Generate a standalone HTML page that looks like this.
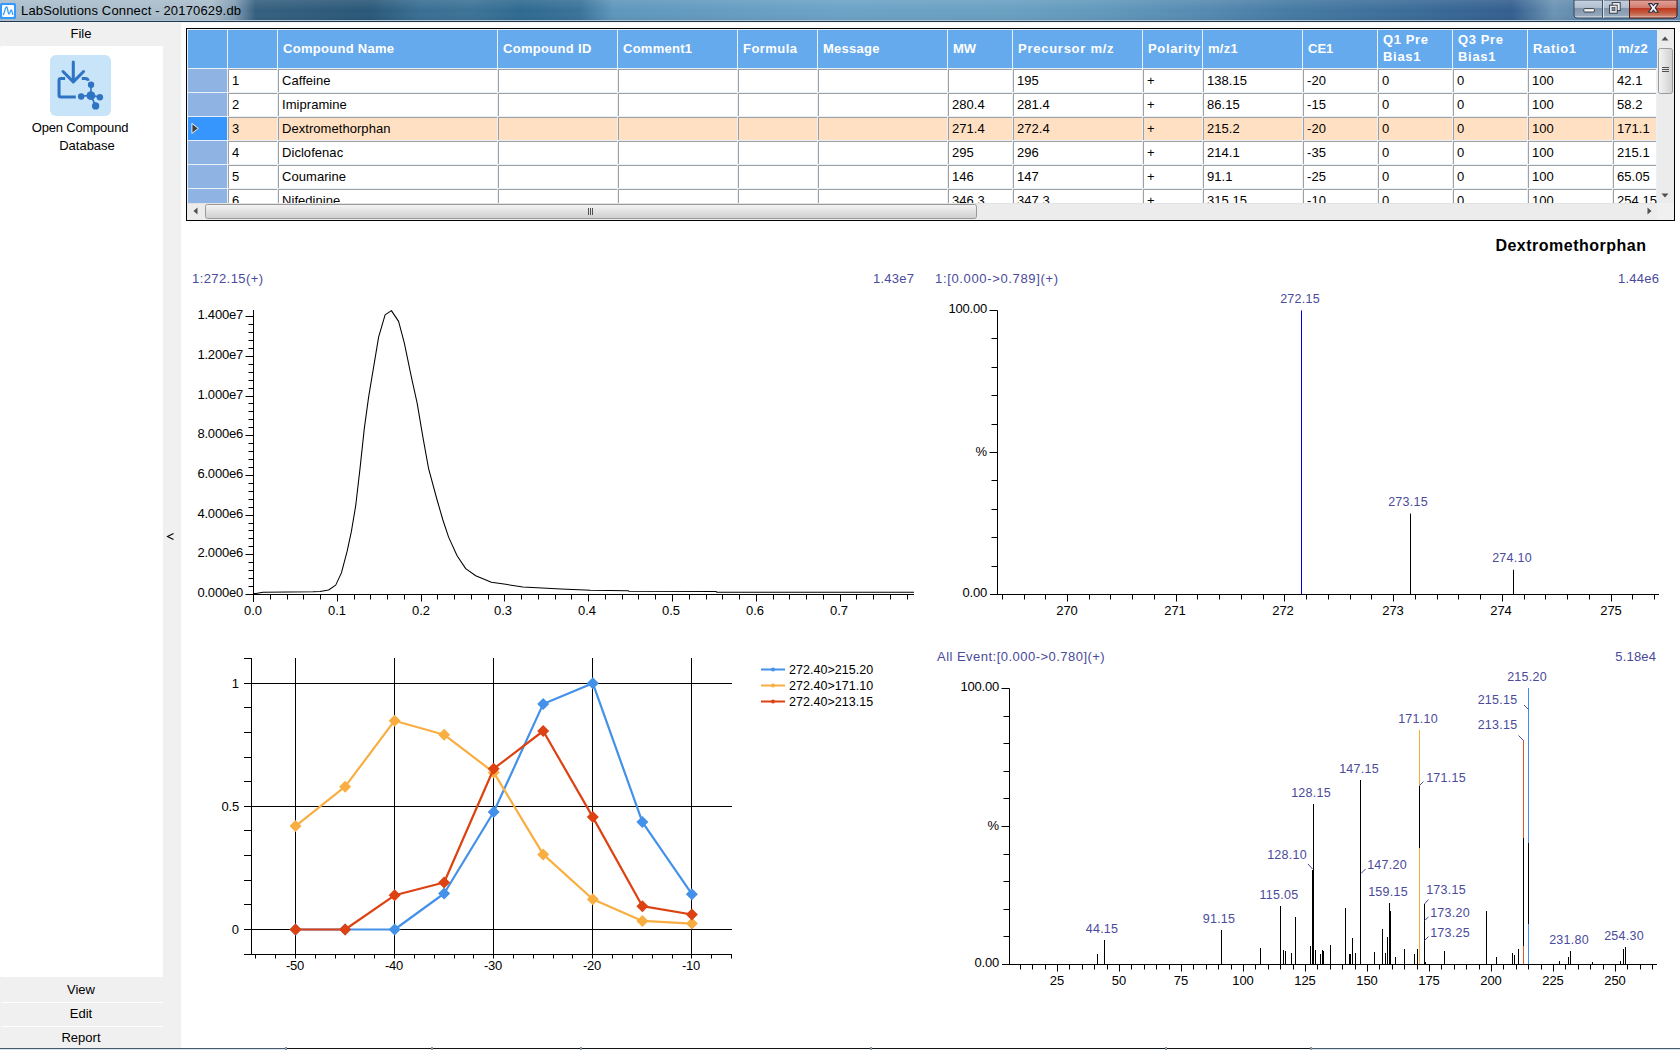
<!DOCTYPE html><html><head><meta charset="utf-8"><title>LabSolutions Connect</title><style>html,body{margin:0;padding:0;width:1680px;height:1050px;overflow:hidden;background:#fff;font-family:"Liberation Sans",sans-serif}</style></head><body><svg width="1680" height="1050" viewBox="0 0 1680 1050" style="position:absolute;left:0;top:0" font-family='"Liberation Sans", sans-serif' shape-rendering="auto">
<rect x="0" y="0" width="1680" height="1050" fill="#ffffff"/>
<defs><linearGradient id="tb" x1="0" x2="1" y1="0" y2="0"><stop offset="0" stop-color="#aabdcc"/><stop offset="0.125" stop-color="#aabdcb"/><stop offset="0.140" stop-color="#7f9bb2"/><stop offset="0.152" stop-color="#36607f"/><stop offset="0.22" stop-color="#2a5878"/><stop offset="0.25" stop-color="#3a6f93"/><stop offset="0.28" stop-color="#3d7397"/><stop offset="0.31" stop-color="#2f6a90"/><stop offset="0.345" stop-color="#3a7399"/><stop offset="0.365" stop-color="#5f96bc"/><stop offset="0.50" stop-color="#6ca3c6"/><stop offset="0.60" stop-color="#6aa0c2"/><stop offset="0.66" stop-color="#6198bb"/><stop offset="0.72" stop-color="#5589b0"/><stop offset="0.77" stop-color="#467aa3"/><stop offset="0.84" stop-color="#3b6c98"/><stop offset="0.90" stop-color="#345f8f"/><stop offset="0.925" stop-color="#6d94b4"/><stop offset="0.95" stop-color="#5683aa"/><stop offset="1" stop-color="#5e8ab0"/></linearGradient><linearGradient id="tbv" x1="0" x2="0" y1="0" y2="1"><stop offset="0" stop-color="#ffffff" stop-opacity="0.10"/><stop offset="0.5" stop-color="#ffffff" stop-opacity="0.0"/><stop offset="1" stop-color="#000000" stop-opacity="0.05"/></linearGradient><linearGradient id="btn" x1="0" x2="0" y1="0" y2="1"><stop offset="0" stop-color="#c5d2de"/><stop offset="0.42" stop-color="#b0bfcf"/><stop offset="0.47" stop-color="#8396ab"/><stop offset="0.86" stop-color="#94a7bb"/><stop offset="0.93" stop-color="#c8d4e0"/><stop offset="1" stop-color="#c8d4e0"/></linearGradient><linearGradient id="cls" x1="0" x2="0" y1="0" y2="1"><stop offset="0" stop-color="#e3a59e"/><stop offset="0.42" stop-color="#d27a6c"/><stop offset="0.47" stop-color="#bd3722"/><stop offset="0.7" stop-color="#c45a3e"/><stop offset="0.86" stop-color="#c97a66"/><stop offset="0.93" stop-color="#dfaaa0"/><stop offset="1" stop-color="#dfaaa0"/></linearGradient><linearGradient id="hthumb" x1="0" x2="0" y1="0" y2="1"><stop offset="0" stop-color="#f4f4f4"/><stop offset="0.5" stop-color="#e2e2e2"/><stop offset="1" stop-color="#cfcfcf"/></linearGradient><linearGradient id="vthumb" x1="0" x2="1" y1="0" y2="0"><stop offset="0" stop-color="#f4f4f4"/><stop offset="0.5" stop-color="#e2e2e2"/><stop offset="1" stop-color="#cfcfcf"/></linearGradient></defs>
<rect x="0" y="0" width="1680" height="21" fill="url(#tb)"/>
<rect x="0" y="0" width="1680" height="21" fill="url(#tbv)"/>
<rect x="0" y="20" width="1680" height="1" fill="#a9c2d6"/>
<rect x="0" y="21" width="1680" height="1" fill="#1f3444"/>
<rect x="0" y="22" width="1680" height="1" fill="#f4f6f8"/>
<rect x="0" y="3" width="16" height="16" fill="#3399ff" rx="1.5"/>
<rect x="2" y="5" width="12" height="12" fill="#ffffff" rx="1"/>
<path d="M3.3,14.6 C4.5,13.5 5,7 6.5,7 C8,7 7.8,14 9,14 C10,14 10.3,10 11.2,10 C12.1,10 12.2,13 12.8,14.4" stroke="#3399ff" stroke-width="1.3" fill="none" stroke-linecap="round"/>
<text x="21" y="15" font-size="13" fill="#000" textLength="220" lengthAdjust="spacing">LabSolutions Connect - 20170629.db</text>
<path d="M1574,0 L1677,0 L1677,15 Q1677,18 1674,18 L1577,18 Q1574,18 1574,15 Z" fill="url(#btn)" stroke="#3a4a5c" stroke-width="1"/>
<path d="M1629.5,0 L1677,0 L1677,15 Q1677,18 1674,18 L1629.5,18 Z" fill="url(#cls)" stroke="#5a1e14" stroke-width="1"/>
<rect x="1602" y="0" width="1" height="18" fill="#40526a"/>
<rect x="1603" y="0" width="1" height="18" fill="#d8e2ec"/>
<rect x="1583.8" y="8.6" width="10.6" height="3.4" rx="0.8" fill="#f4f4f4" stroke="#2a3240" stroke-width="0.9"/>
<rect x="1612.2" y="2.6" width="8" height="8" fill="#f0f0f0" stroke="#2a3240" stroke-width="0.9"/>
<rect x="1609.6" y="5.2" width="7.6" height="8" fill="#f0f0f0" stroke="#2a3240" stroke-width="0.9"/>
<rect x="1612" y="7.6" width="3" height="3.2" fill="#7d8ea3" stroke="#2a3240" stroke-width="0.6"/>
<path d="M1648.6,3.6 L1651.9,3.6 L1653.4,5.7 L1654.9,3.6 L1658.2,3.6 L1655.3,7.9 L1658.2,12.2 L1654.9,12.2 L1653.4,10.1 L1651.9,12.2 L1648.6,12.2 L1651.5,7.9 Z" fill="#fafafa" stroke="#2a3240" stroke-width="1.1" stroke-linejoin="round"/>
<rect x="0" y="23" width="181" height="1025" fill="#f0f0f0"/>
<text x="81" y="38" font-size="13" fill="#000" text-anchor="middle">File</text>
<path d="M0,48 Q0,46 2,46 L163,46 L163,977 L2,977 Q0,977 0,975 Z" fill="#ffffff"/>
<rect x="50" y="55" width="61" height="61" fill="#c8e4f8" rx="6"/>
<g transform="translate(40,45) scale(0.0761904761904762)" fill="none" stroke="#2f74c4" stroke-width="40" stroke-linecap="round" stroke-linejoin="round"><path d="M437,222 L437,470"/><path d="M302,348 L437,483 L572,348"/><path d="M330,440 L275,440 Q250,440 250,465 L250,660 Q250,683 273,683 L470,683" stroke-linecap="butt"/><path d="M548,440 L598,440 Q628,440 632,470" stroke-linecap="butt"/><path d="M670,525 L668,660 L540,675 M668,660 L785,685 M668,660 L730,800" stroke-width="22"/></g>
<g transform="translate(40,45) scale(0.0761904761904762)" fill="#2f74c4"><circle cx="668" cy="665" r="58"/><circle cx="670" cy="522" r="42"/><circle cx="540" cy="675" r="42"/><circle cx="786" cy="686" r="42"/><circle cx="730" cy="800" r="48"/></g>
<text x="80" y="132" font-size="13" fill="#000" text-anchor="middle" letter-spacing="-0.2">Open Compound</text>
<text x="87" y="150" font-size="13" fill="#000" text-anchor="middle">Database</text>
<path d="M173.5,533.5 L167.5,536.5 L173.5,539.5" stroke="#000" stroke-width="1.1" fill="none"/>
<text x="81" y="994" font-size="13" fill="#000" text-anchor="middle">View</text>
<rect x="2" y="1002" width="161" height="1" fill="#ffffff"/>
<text x="81" y="1018" font-size="13" fill="#000" text-anchor="middle">Edit</text>
<rect x="2" y="1026" width="161" height="1" fill="#ffffff"/>
<text x="81" y="1042" font-size="13" fill="#000" text-anchor="middle">Report</text>
<rect x="0" y="1048" width="285" height="1" fill="#4a5a68"/>
<rect x="0" y="1049" width="285" height="1" fill="#d6e6f6"/>
<rect x="285" y="1048" width="1026" height="1" fill="#121619"/>
<rect x="285" y="1049" width="1026" height="1" fill="#fbfbfb"/>
<rect x="1311" y="1048" width="369" height="1" fill="#4a5a68"/>
<rect x="1311" y="1049" width="369" height="1" fill="#d6e6f6"/>
<rect x="285" y="1047" width="2" height="3" fill="#8a96a0"/>
<rect x="431" y="1047" width="2" height="3" fill="#8a96a0"/>
<rect x="580" y="1047" width="2" height="3" fill="#8a96a0"/>
<rect x="870" y="1047" width="2" height="3" fill="#8a96a0"/>
<rect x="1165" y="1047" width="2" height="3" fill="#8a96a0"/>
<rect x="1310" y="1047" width="2" height="3" fill="#8a96a0"/>
<rect x="186.5" y="28.5" width="1488" height="192" fill="none" stroke="#000" stroke-width="1"/>
<rect x="187" y="29" width="1487" height="191" fill="#e8f1fa"/>
<clipPath id="tclip"><rect x="187" y="29" width="1470" height="174"/></clipPath>
<g clip-path="url(#tclip)">
<rect x="188" y="30" width="1469" height="38" fill="#66aaee"/>
<rect x="227" y="30" width="1" height="38" fill="#e8f1fa"/>
<rect x="277" y="30" width="1" height="38" fill="#e8f1fa"/>
<rect x="497" y="30" width="1" height="38" fill="#e8f1fa"/>
<rect x="617" y="30" width="1" height="38" fill="#e8f1fa"/>
<rect x="737" y="30" width="1" height="38" fill="#e8f1fa"/>
<rect x="817" y="30" width="1" height="38" fill="#e8f1fa"/>
<rect x="947" y="30" width="1" height="38" fill="#e8f1fa"/>
<rect x="1012" y="30" width="1" height="38" fill="#e8f1fa"/>
<rect x="1142" y="30" width="1" height="38" fill="#e8f1fa"/>
<rect x="1202" y="30" width="1" height="38" fill="#e8f1fa"/>
<rect x="1302" y="30" width="1" height="38" fill="#e8f1fa"/>
<rect x="1377" y="30" width="1" height="38" fill="#e8f1fa"/>
<rect x="1452" y="30" width="1" height="38" fill="#e8f1fa"/>
<rect x="1527" y="30" width="1" height="38" fill="#e8f1fa"/>
<rect x="1612" y="30" width="1" height="38" fill="#e8f1fa"/>
<rect x="188" y="68" width="1469" height="1" fill="#e8f1fa"/>
<text x="283" y="53" font-size="13" fill="#fff" font-weight="bold" textLength="111" lengthAdjust="spacing">Compound Name</text>
<text x="503" y="53" font-size="13" fill="#fff" font-weight="bold" textLength="88.3" lengthAdjust="spacing">Compound ID</text>
<text x="623" y="53" font-size="13" fill="#fff" font-weight="bold" textLength="69" lengthAdjust="spacing">Comment1</text>
<text x="743" y="53" font-size="13" fill="#fff" font-weight="bold" textLength="54" lengthAdjust="spacing">Formula</text>
<text x="823" y="53" font-size="13" fill="#fff" font-weight="bold" textLength="56.5" lengthAdjust="spacing">Message</text>
<text x="953" y="53" font-size="13" fill="#fff" font-weight="bold" letter-spacing="0">MW</text>
<text x="1018" y="53" font-size="13" fill="#fff" font-weight="bold" textLength="95.6" lengthAdjust="spacing">Precursor m/z</text>
<text x="1148" y="53" font-size="13" fill="#fff" font-weight="bold" textLength="52.2" lengthAdjust="spacing">Polarity</text>
<text x="1208" y="53" font-size="13" fill="#fff" font-weight="bold" letter-spacing="0.3">m/z1</text>
<text x="1308" y="53" font-size="13" fill="#fff" font-weight="bold" letter-spacing="0">CE1</text>
<text x="1383" y="44" font-size="13" fill="#fff" font-weight="bold" textLength="45" lengthAdjust="spacing">Q1 Pre</text>
<text x="1383" y="61" font-size="13" fill="#fff" font-weight="bold" textLength="37.5" lengthAdjust="spacing">Bias1</text>
<text x="1458" y="44" font-size="13" fill="#fff" font-weight="bold" textLength="45" lengthAdjust="spacing">Q3 Pre</text>
<text x="1458" y="61" font-size="13" fill="#fff" font-weight="bold" textLength="37.5" lengthAdjust="spacing">Bias1</text>
<text x="1533" y="53" font-size="13" fill="#fff" font-weight="bold" textLength="43" lengthAdjust="spacing">Ratio1</text>
<text x="1618" y="53" font-size="13" fill="#fff" font-weight="bold" letter-spacing="0.3">m/z2</text>
<rect x="188" y="69" width="39" height="23" fill="#8fb3e3"/>
<rect x="228" y="69" width="49" height="23" fill="#a0a0a0"/>
<rect x="229" y="70" width="48" height="22" fill="#ffffff"/>
<text x="232" y="85" font-size="13" fill="#000" letter-spacing="0.05">1</text>
<rect x="278" y="69" width="219" height="23" fill="#a0a0a0"/>
<rect x="279" y="70" width="218" height="22" fill="#ffffff"/>
<text x="282" y="85" font-size="13" fill="#000" letter-spacing="0.05">Caffeine</text>
<rect x="498" y="69" width="119" height="23" fill="#a0a0a0"/>
<rect x="499" y="70" width="118" height="22" fill="#ffffff"/>
<rect x="618" y="69" width="119" height="23" fill="#a0a0a0"/>
<rect x="619" y="70" width="118" height="22" fill="#ffffff"/>
<rect x="738" y="69" width="79" height="23" fill="#a0a0a0"/>
<rect x="739" y="70" width="78" height="22" fill="#ffffff"/>
<rect x="818" y="69" width="129" height="23" fill="#a0a0a0"/>
<rect x="819" y="70" width="128" height="22" fill="#ffffff"/>
<rect x="948" y="69" width="64" height="23" fill="#a0a0a0"/>
<rect x="949" y="70" width="63" height="22" fill="#ffffff"/>
<rect x="1013" y="69" width="129" height="23" fill="#a0a0a0"/>
<rect x="1014" y="70" width="128" height="22" fill="#ffffff"/>
<text x="1017" y="85" font-size="13" fill="#000" letter-spacing="0.05">195</text>
<rect x="1143" y="69" width="59" height="23" fill="#a0a0a0"/>
<rect x="1144" y="70" width="58" height="22" fill="#ffffff"/>
<text x="1147" y="85" font-size="13" fill="#000" letter-spacing="0.05">+</text>
<rect x="1203" y="69" width="99" height="23" fill="#a0a0a0"/>
<rect x="1204" y="70" width="98" height="22" fill="#ffffff"/>
<text x="1207" y="85" font-size="13" fill="#000" letter-spacing="0.05">138.15</text>
<rect x="1303" y="69" width="74" height="23" fill="#a0a0a0"/>
<rect x="1304" y="70" width="73" height="22" fill="#ffffff"/>
<text x="1307" y="85" font-size="13" fill="#000" letter-spacing="0.05">-20</text>
<rect x="1378" y="69" width="74" height="23" fill="#a0a0a0"/>
<rect x="1379" y="70" width="73" height="22" fill="#ffffff"/>
<text x="1382" y="85" font-size="13" fill="#000" letter-spacing="0.05">0</text>
<rect x="1453" y="69" width="74" height="23" fill="#a0a0a0"/>
<rect x="1454" y="70" width="73" height="22" fill="#ffffff"/>
<text x="1457" y="85" font-size="13" fill="#000" letter-spacing="0.05">0</text>
<rect x="1528" y="69" width="84" height="23" fill="#a0a0a0"/>
<rect x="1529" y="70" width="83" height="22" fill="#ffffff"/>
<text x="1532" y="85" font-size="13" fill="#000" letter-spacing="0.05">100</text>
<rect x="1613" y="69" width="43" height="23" fill="#a0a0a0"/>
<rect x="1614" y="70" width="42" height="22" fill="#ffffff"/>
<text x="1617" y="85" font-size="13" fill="#000" letter-spacing="0.05">42.1</text>
<rect x="188" y="93" width="39" height="23" fill="#8fb3e3"/>
<rect x="228" y="93" width="49" height="23" fill="#a0a0a0"/>
<rect x="229" y="94" width="48" height="22" fill="#ffffff"/>
<text x="232" y="109" font-size="13" fill="#000" letter-spacing="0.05">2</text>
<rect x="278" y="93" width="219" height="23" fill="#a0a0a0"/>
<rect x="279" y="94" width="218" height="22" fill="#ffffff"/>
<text x="282" y="109" font-size="13" fill="#000" letter-spacing="0.05">Imipramine</text>
<rect x="498" y="93" width="119" height="23" fill="#a0a0a0"/>
<rect x="499" y="94" width="118" height="22" fill="#ffffff"/>
<rect x="618" y="93" width="119" height="23" fill="#a0a0a0"/>
<rect x="619" y="94" width="118" height="22" fill="#ffffff"/>
<rect x="738" y="93" width="79" height="23" fill="#a0a0a0"/>
<rect x="739" y="94" width="78" height="22" fill="#ffffff"/>
<rect x="818" y="93" width="129" height="23" fill="#a0a0a0"/>
<rect x="819" y="94" width="128" height="22" fill="#ffffff"/>
<rect x="948" y="93" width="64" height="23" fill="#a0a0a0"/>
<rect x="949" y="94" width="63" height="22" fill="#ffffff"/>
<text x="952" y="109" font-size="13" fill="#000" letter-spacing="0.05">280.4</text>
<rect x="1013" y="93" width="129" height="23" fill="#a0a0a0"/>
<rect x="1014" y="94" width="128" height="22" fill="#ffffff"/>
<text x="1017" y="109" font-size="13" fill="#000" letter-spacing="0.05">281.4</text>
<rect x="1143" y="93" width="59" height="23" fill="#a0a0a0"/>
<rect x="1144" y="94" width="58" height="22" fill="#ffffff"/>
<text x="1147" y="109" font-size="13" fill="#000" letter-spacing="0.05">+</text>
<rect x="1203" y="93" width="99" height="23" fill="#a0a0a0"/>
<rect x="1204" y="94" width="98" height="22" fill="#ffffff"/>
<text x="1207" y="109" font-size="13" fill="#000" letter-spacing="0.05">86.15</text>
<rect x="1303" y="93" width="74" height="23" fill="#a0a0a0"/>
<rect x="1304" y="94" width="73" height="22" fill="#ffffff"/>
<text x="1307" y="109" font-size="13" fill="#000" letter-spacing="0.05">-15</text>
<rect x="1378" y="93" width="74" height="23" fill="#a0a0a0"/>
<rect x="1379" y="94" width="73" height="22" fill="#ffffff"/>
<text x="1382" y="109" font-size="13" fill="#000" letter-spacing="0.05">0</text>
<rect x="1453" y="93" width="74" height="23" fill="#a0a0a0"/>
<rect x="1454" y="94" width="73" height="22" fill="#ffffff"/>
<text x="1457" y="109" font-size="13" fill="#000" letter-spacing="0.05">0</text>
<rect x="1528" y="93" width="84" height="23" fill="#a0a0a0"/>
<rect x="1529" y="94" width="83" height="22" fill="#ffffff"/>
<text x="1532" y="109" font-size="13" fill="#000" letter-spacing="0.05">100</text>
<rect x="1613" y="93" width="43" height="23" fill="#a0a0a0"/>
<rect x="1614" y="94" width="42" height="22" fill="#ffffff"/>
<text x="1617" y="109" font-size="13" fill="#000" letter-spacing="0.05">58.2</text>
<rect x="188" y="117" width="39" height="23" fill="#3796fe"/>
<path d="M191.9,123.4 L198.4,128.4 L191.9,133.4 Z" fill="#404040" stroke="#ffffff" stroke-width="0.9" stroke-linejoin="miter"/>
<rect x="228" y="117" width="49" height="23" fill="#a0a0a0"/>
<rect x="229" y="118" width="48" height="22" fill="#ffe0c2"/>
<text x="232" y="133" font-size="13" fill="#000" letter-spacing="0.05">3</text>
<rect x="278" y="117" width="219" height="23" fill="#a0a0a0"/>
<rect x="279" y="118" width="218" height="22" fill="#ffe0c2"/>
<text x="282" y="133" font-size="13" fill="#000" letter-spacing="0.05">Dextromethorphan</text>
<rect x="498" y="117" width="119" height="23" fill="#a0a0a0"/>
<rect x="499" y="118" width="118" height="22" fill="#ffe0c2"/>
<rect x="618" y="117" width="119" height="23" fill="#a0a0a0"/>
<rect x="619" y="118" width="118" height="22" fill="#ffe0c2"/>
<rect x="738" y="117" width="79" height="23" fill="#a0a0a0"/>
<rect x="739" y="118" width="78" height="22" fill="#ffe0c2"/>
<rect x="818" y="117" width="129" height="23" fill="#a0a0a0"/>
<rect x="819" y="118" width="128" height="22" fill="#ffe0c2"/>
<rect x="948" y="117" width="64" height="23" fill="#a0a0a0"/>
<rect x="949" y="118" width="63" height="22" fill="#ffe0c2"/>
<text x="952" y="133" font-size="13" fill="#000" letter-spacing="0.05">271.4</text>
<rect x="1013" y="117" width="129" height="23" fill="#a0a0a0"/>
<rect x="1014" y="118" width="128" height="22" fill="#ffe0c2"/>
<text x="1017" y="133" font-size="13" fill="#000" letter-spacing="0.05">272.4</text>
<rect x="1143" y="117" width="59" height="23" fill="#a0a0a0"/>
<rect x="1144" y="118" width="58" height="22" fill="#ffe0c2"/>
<text x="1147" y="133" font-size="13" fill="#000" letter-spacing="0.05">+</text>
<rect x="1203" y="117" width="99" height="23" fill="#a0a0a0"/>
<rect x="1204" y="118" width="98" height="22" fill="#ffe0c2"/>
<text x="1207" y="133" font-size="13" fill="#000" letter-spacing="0.05">215.2</text>
<rect x="1303" y="117" width="74" height="23" fill="#a0a0a0"/>
<rect x="1304" y="118" width="73" height="22" fill="#ffe0c2"/>
<text x="1307" y="133" font-size="13" fill="#000" letter-spacing="0.05">-20</text>
<rect x="1378" y="117" width="74" height="23" fill="#a0a0a0"/>
<rect x="1379" y="118" width="73" height="22" fill="#ffe0c2"/>
<text x="1382" y="133" font-size="13" fill="#000" letter-spacing="0.05">0</text>
<rect x="1453" y="117" width="74" height="23" fill="#a0a0a0"/>
<rect x="1454" y="118" width="73" height="22" fill="#ffe0c2"/>
<text x="1457" y="133" font-size="13" fill="#000" letter-spacing="0.05">0</text>
<rect x="1528" y="117" width="84" height="23" fill="#a0a0a0"/>
<rect x="1529" y="118" width="83" height="22" fill="#ffe0c2"/>
<text x="1532" y="133" font-size="13" fill="#000" letter-spacing="0.05">100</text>
<rect x="1613" y="117" width="43" height="23" fill="#a0a0a0"/>
<rect x="1614" y="118" width="42" height="22" fill="#ffe0c2"/>
<text x="1617" y="133" font-size="13" fill="#000" letter-spacing="0.05">171.1</text>
<rect x="188" y="141" width="39" height="23" fill="#8fb3e3"/>
<rect x="228" y="141" width="49" height="23" fill="#a0a0a0"/>
<rect x="229" y="142" width="48" height="22" fill="#ffffff"/>
<text x="232" y="157" font-size="13" fill="#000" letter-spacing="0.05">4</text>
<rect x="278" y="141" width="219" height="23" fill="#a0a0a0"/>
<rect x="279" y="142" width="218" height="22" fill="#ffffff"/>
<text x="282" y="157" font-size="13" fill="#000" letter-spacing="0.05">Diclofenac</text>
<rect x="498" y="141" width="119" height="23" fill="#a0a0a0"/>
<rect x="499" y="142" width="118" height="22" fill="#ffffff"/>
<rect x="618" y="141" width="119" height="23" fill="#a0a0a0"/>
<rect x="619" y="142" width="118" height="22" fill="#ffffff"/>
<rect x="738" y="141" width="79" height="23" fill="#a0a0a0"/>
<rect x="739" y="142" width="78" height="22" fill="#ffffff"/>
<rect x="818" y="141" width="129" height="23" fill="#a0a0a0"/>
<rect x="819" y="142" width="128" height="22" fill="#ffffff"/>
<rect x="948" y="141" width="64" height="23" fill="#a0a0a0"/>
<rect x="949" y="142" width="63" height="22" fill="#ffffff"/>
<text x="952" y="157" font-size="13" fill="#000" letter-spacing="0.05">295</text>
<rect x="1013" y="141" width="129" height="23" fill="#a0a0a0"/>
<rect x="1014" y="142" width="128" height="22" fill="#ffffff"/>
<text x="1017" y="157" font-size="13" fill="#000" letter-spacing="0.05">296</text>
<rect x="1143" y="141" width="59" height="23" fill="#a0a0a0"/>
<rect x="1144" y="142" width="58" height="22" fill="#ffffff"/>
<text x="1147" y="157" font-size="13" fill="#000" letter-spacing="0.05">+</text>
<rect x="1203" y="141" width="99" height="23" fill="#a0a0a0"/>
<rect x="1204" y="142" width="98" height="22" fill="#ffffff"/>
<text x="1207" y="157" font-size="13" fill="#000" letter-spacing="0.05">214.1</text>
<rect x="1303" y="141" width="74" height="23" fill="#a0a0a0"/>
<rect x="1304" y="142" width="73" height="22" fill="#ffffff"/>
<text x="1307" y="157" font-size="13" fill="#000" letter-spacing="0.05">-35</text>
<rect x="1378" y="141" width="74" height="23" fill="#a0a0a0"/>
<rect x="1379" y="142" width="73" height="22" fill="#ffffff"/>
<text x="1382" y="157" font-size="13" fill="#000" letter-spacing="0.05">0</text>
<rect x="1453" y="141" width="74" height="23" fill="#a0a0a0"/>
<rect x="1454" y="142" width="73" height="22" fill="#ffffff"/>
<text x="1457" y="157" font-size="13" fill="#000" letter-spacing="0.05">0</text>
<rect x="1528" y="141" width="84" height="23" fill="#a0a0a0"/>
<rect x="1529" y="142" width="83" height="22" fill="#ffffff"/>
<text x="1532" y="157" font-size="13" fill="#000" letter-spacing="0.05">100</text>
<rect x="1613" y="141" width="43" height="23" fill="#a0a0a0"/>
<rect x="1614" y="142" width="42" height="22" fill="#ffffff"/>
<text x="1617" y="157" font-size="13" fill="#000" letter-spacing="0.05">215.1</text>
<rect x="188" y="165" width="39" height="23" fill="#8fb3e3"/>
<rect x="228" y="165" width="49" height="23" fill="#a0a0a0"/>
<rect x="229" y="166" width="48" height="22" fill="#ffffff"/>
<text x="232" y="181" font-size="13" fill="#000" letter-spacing="0.05">5</text>
<rect x="278" y="165" width="219" height="23" fill="#a0a0a0"/>
<rect x="279" y="166" width="218" height="22" fill="#ffffff"/>
<text x="282" y="181" font-size="13" fill="#000" letter-spacing="0.05">Coumarine</text>
<rect x="498" y="165" width="119" height="23" fill="#a0a0a0"/>
<rect x="499" y="166" width="118" height="22" fill="#ffffff"/>
<rect x="618" y="165" width="119" height="23" fill="#a0a0a0"/>
<rect x="619" y="166" width="118" height="22" fill="#ffffff"/>
<rect x="738" y="165" width="79" height="23" fill="#a0a0a0"/>
<rect x="739" y="166" width="78" height="22" fill="#ffffff"/>
<rect x="818" y="165" width="129" height="23" fill="#a0a0a0"/>
<rect x="819" y="166" width="128" height="22" fill="#ffffff"/>
<rect x="948" y="165" width="64" height="23" fill="#a0a0a0"/>
<rect x="949" y="166" width="63" height="22" fill="#ffffff"/>
<text x="952" y="181" font-size="13" fill="#000" letter-spacing="0.05">146</text>
<rect x="1013" y="165" width="129" height="23" fill="#a0a0a0"/>
<rect x="1014" y="166" width="128" height="22" fill="#ffffff"/>
<text x="1017" y="181" font-size="13" fill="#000" letter-spacing="0.05">147</text>
<rect x="1143" y="165" width="59" height="23" fill="#a0a0a0"/>
<rect x="1144" y="166" width="58" height="22" fill="#ffffff"/>
<text x="1147" y="181" font-size="13" fill="#000" letter-spacing="0.05">+</text>
<rect x="1203" y="165" width="99" height="23" fill="#a0a0a0"/>
<rect x="1204" y="166" width="98" height="22" fill="#ffffff"/>
<text x="1207" y="181" font-size="13" fill="#000" letter-spacing="0.05">91.1</text>
<rect x="1303" y="165" width="74" height="23" fill="#a0a0a0"/>
<rect x="1304" y="166" width="73" height="22" fill="#ffffff"/>
<text x="1307" y="181" font-size="13" fill="#000" letter-spacing="0.05">-25</text>
<rect x="1378" y="165" width="74" height="23" fill="#a0a0a0"/>
<rect x="1379" y="166" width="73" height="22" fill="#ffffff"/>
<text x="1382" y="181" font-size="13" fill="#000" letter-spacing="0.05">0</text>
<rect x="1453" y="165" width="74" height="23" fill="#a0a0a0"/>
<rect x="1454" y="166" width="73" height="22" fill="#ffffff"/>
<text x="1457" y="181" font-size="13" fill="#000" letter-spacing="0.05">0</text>
<rect x="1528" y="165" width="84" height="23" fill="#a0a0a0"/>
<rect x="1529" y="166" width="83" height="22" fill="#ffffff"/>
<text x="1532" y="181" font-size="13" fill="#000" letter-spacing="0.05">100</text>
<rect x="1613" y="165" width="43" height="23" fill="#a0a0a0"/>
<rect x="1614" y="166" width="42" height="22" fill="#ffffff"/>
<text x="1617" y="181" font-size="13" fill="#000" letter-spacing="0.05">65.05</text>
<rect x="188" y="189" width="39" height="23" fill="#8fb3e3"/>
<rect x="228" y="189" width="49" height="23" fill="#a0a0a0"/>
<rect x="229" y="190" width="48" height="22" fill="#ffffff"/>
<text x="232" y="205" font-size="13" fill="#000" letter-spacing="0.05">6</text>
<rect x="278" y="189" width="219" height="23" fill="#a0a0a0"/>
<rect x="279" y="190" width="218" height="22" fill="#ffffff"/>
<text x="282" y="205" font-size="13" fill="#000" letter-spacing="0.05">Nifedinine</text>
<rect x="498" y="189" width="119" height="23" fill="#a0a0a0"/>
<rect x="499" y="190" width="118" height="22" fill="#ffffff"/>
<rect x="618" y="189" width="119" height="23" fill="#a0a0a0"/>
<rect x="619" y="190" width="118" height="22" fill="#ffffff"/>
<rect x="738" y="189" width="79" height="23" fill="#a0a0a0"/>
<rect x="739" y="190" width="78" height="22" fill="#ffffff"/>
<rect x="818" y="189" width="129" height="23" fill="#a0a0a0"/>
<rect x="819" y="190" width="128" height="22" fill="#ffffff"/>
<rect x="948" y="189" width="64" height="23" fill="#a0a0a0"/>
<rect x="949" y="190" width="63" height="22" fill="#ffffff"/>
<text x="952" y="205" font-size="13" fill="#000" letter-spacing="0.05">346.3</text>
<rect x="1013" y="189" width="129" height="23" fill="#a0a0a0"/>
<rect x="1014" y="190" width="128" height="22" fill="#ffffff"/>
<text x="1017" y="205" font-size="13" fill="#000" letter-spacing="0.05">347.3</text>
<rect x="1143" y="189" width="59" height="23" fill="#a0a0a0"/>
<rect x="1144" y="190" width="58" height="22" fill="#ffffff"/>
<text x="1147" y="205" font-size="13" fill="#000" letter-spacing="0.05">+</text>
<rect x="1203" y="189" width="99" height="23" fill="#a0a0a0"/>
<rect x="1204" y="190" width="98" height="22" fill="#ffffff"/>
<text x="1207" y="205" font-size="13" fill="#000" letter-spacing="0.05">315.15</text>
<rect x="1303" y="189" width="74" height="23" fill="#a0a0a0"/>
<rect x="1304" y="190" width="73" height="22" fill="#ffffff"/>
<text x="1307" y="205" font-size="13" fill="#000" letter-spacing="0.05">-10</text>
<rect x="1378" y="189" width="74" height="23" fill="#a0a0a0"/>
<rect x="1379" y="190" width="73" height="22" fill="#ffffff"/>
<text x="1382" y="205" font-size="13" fill="#000" letter-spacing="0.05">0</text>
<rect x="1453" y="189" width="74" height="23" fill="#a0a0a0"/>
<rect x="1454" y="190" width="73" height="22" fill="#ffffff"/>
<text x="1457" y="205" font-size="13" fill="#000" letter-spacing="0.05">0</text>
<rect x="1528" y="189" width="84" height="23" fill="#a0a0a0"/>
<rect x="1529" y="190" width="83" height="22" fill="#ffffff"/>
<text x="1532" y="205" font-size="13" fill="#000" letter-spacing="0.05">100</text>
<rect x="1613" y="189" width="43" height="23" fill="#a0a0a0"/>
<rect x="1614" y="190" width="42" height="22" fill="#ffffff"/>
<text x="1617" y="205" font-size="13" fill="#000" letter-spacing="0.05">254.15</text>
</g>
<rect x="187" y="203" width="1470" height="17" fill="#ececec"/>
<rect x="187" y="203" width="1470" height="1" fill="#e3e3e3"/>
<path d="M197.5,207.5 L193.5,211 L197.5,214.5 Z" fill="#505050"/>
<rect x="205.5" y="204.5" width="771" height="14" rx="2" fill="url(#hthumb)" stroke="#9a9a9a" stroke-width="1"/>
<rect x="588" y="208" width="1" height="7" fill="#505050"/>
<rect x="590" y="208" width="1" height="7" fill="#505050"/>
<rect x="592" y="208" width="1" height="7" fill="#505050"/>
<path d="M1647.5,207.5 L1651.5,211 L1647.5,214.5 Z" fill="#505050"/>
<rect x="1657" y="29" width="17" height="174" fill="#ececec"/>
<path d="M1661.5,40.5 L1665,36.5 L1668.5,40.5 Z" fill="#505050"/>
<rect x="1658.5" y="48.5" width="14" height="45" rx="2" fill="url(#vthumb)" stroke="#9a9a9a" stroke-width="1"/>
<rect x="1662" y="67" width="7" height="1" fill="#505050"/>
<rect x="1662" y="69" width="7" height="1" fill="#505050"/>
<rect x="1662" y="71" width="7" height="1" fill="#505050"/>
<path d="M1661.5,193.5 L1665,197.5 L1668.5,193.5 Z" fill="#505050"/>
<rect x="1657" y="203" width="17" height="17" fill="#f0f0f0"/>
<text x="192" y="283" font-size="13" fill="#4a4a9c" textLength="71" lengthAdjust="spacing">1:272.15(+)</text>
<text x="914" y="283" font-size="13" fill="#4a4a9c" text-anchor="end" textLength="41" lengthAdjust="spacing">1.43e7</text>
<path d="M253.5,310 L253.5,602 M245.5,594.5 L914,594.5" stroke="#000" stroke-width="1" fill="none"/>
<text x="243" y="597" font-size="13" fill="#000" text-anchor="end" letter-spacing="-0.2">0.000e0</text>
<path d="M248.5,586.5 L253.5,586.5" stroke="#000" stroke-width="1"/>
<path d="M248.5,578.5 L253.5,578.5" stroke="#000" stroke-width="1"/>
<path d="M248.5,570.5 L253.5,570.5" stroke="#000" stroke-width="1"/>
<path d="M248.5,562.5 L253.5,562.5" stroke="#000" stroke-width="1"/>
<path d="M245.5,554.5 L253.5,554.5" stroke="#000" stroke-width="1"/>
<text x="243" y="557" font-size="13" fill="#000" text-anchor="end" letter-spacing="-0.2">2.000e6</text>
<path d="M248.5,546.5 L253.5,546.5" stroke="#000" stroke-width="1"/>
<path d="M248.5,538.5 L253.5,538.5" stroke="#000" stroke-width="1"/>
<path d="M248.5,530.5 L253.5,530.5" stroke="#000" stroke-width="1"/>
<path d="M248.5,523.5 L253.5,523.5" stroke="#000" stroke-width="1"/>
<path d="M245.5,515.5 L253.5,515.5" stroke="#000" stroke-width="1"/>
<text x="243" y="518" font-size="13" fill="#000" text-anchor="end" letter-spacing="-0.2">4.000e6</text>
<path d="M248.5,507.5 L253.5,507.5" stroke="#000" stroke-width="1"/>
<path d="M248.5,499.5 L253.5,499.5" stroke="#000" stroke-width="1"/>
<path d="M248.5,491.5 L253.5,491.5" stroke="#000" stroke-width="1"/>
<path d="M248.5,483.5 L253.5,483.5" stroke="#000" stroke-width="1"/>
<path d="M245.5,475.5 L253.5,475.5" stroke="#000" stroke-width="1"/>
<text x="243" y="478" font-size="13" fill="#000" text-anchor="end" letter-spacing="-0.2">6.000e6</text>
<path d="M248.5,467.5 L253.5,467.5" stroke="#000" stroke-width="1"/>
<path d="M248.5,459.5 L253.5,459.5" stroke="#000" stroke-width="1"/>
<path d="M248.5,451.5 L253.5,451.5" stroke="#000" stroke-width="1"/>
<path d="M248.5,443.5 L253.5,443.5" stroke="#000" stroke-width="1"/>
<path d="M245.5,435.5 L253.5,435.5" stroke="#000" stroke-width="1"/>
<text x="243" y="438" font-size="13" fill="#000" text-anchor="end" letter-spacing="-0.2">8.000e6</text>
<path d="M248.5,427.5 L253.5,427.5" stroke="#000" stroke-width="1"/>
<path d="M248.5,419.5 L253.5,419.5" stroke="#000" stroke-width="1"/>
<path d="M248.5,411.5 L253.5,411.5" stroke="#000" stroke-width="1"/>
<path d="M248.5,403.5 L253.5,403.5" stroke="#000" stroke-width="1"/>
<path d="M245.5,396.5 L253.5,396.5" stroke="#000" stroke-width="1"/>
<text x="243" y="399" font-size="13" fill="#000" text-anchor="end" letter-spacing="-0.2">1.000e7</text>
<path d="M248.5,388.5 L253.5,388.5" stroke="#000" stroke-width="1"/>
<path d="M248.5,380.5 L253.5,380.5" stroke="#000" stroke-width="1"/>
<path d="M248.5,372.5 L253.5,372.5" stroke="#000" stroke-width="1"/>
<path d="M248.5,364.5 L253.5,364.5" stroke="#000" stroke-width="1"/>
<path d="M245.5,356.5 L253.5,356.5" stroke="#000" stroke-width="1"/>
<text x="243" y="359" font-size="13" fill="#000" text-anchor="end" letter-spacing="-0.2">1.200e7</text>
<path d="M248.5,348.5 L253.5,348.5" stroke="#000" stroke-width="1"/>
<path d="M248.5,340.5 L253.5,340.5" stroke="#000" stroke-width="1"/>
<path d="M248.5,332.5 L253.5,332.5" stroke="#000" stroke-width="1"/>
<path d="M248.5,324.5 L253.5,324.5" stroke="#000" stroke-width="1"/>
<path d="M245.5,316.5 L253.5,316.5" stroke="#000" stroke-width="1"/>
<text x="243" y="319" font-size="13" fill="#000" text-anchor="end" letter-spacing="-0.2">1.400e7</text>
<text x="253" y="615" font-size="13" fill="#000" text-anchor="middle" letter-spacing="-0.1">0.0</text>
<path d="M270.5,594.5 L270.5,599.5" stroke="#000" stroke-width="1"/>
<path d="M287.5,594.5 L287.5,599.5" stroke="#000" stroke-width="1"/>
<path d="M303.5,594.5 L303.5,599.5" stroke="#000" stroke-width="1"/>
<path d="M320.5,594.5 L320.5,599.5" stroke="#000" stroke-width="1"/>
<path d="M337.5,594.5 L337.5,601.5" stroke="#000" stroke-width="1"/>
<text x="337" y="615" font-size="13" fill="#000" text-anchor="middle" letter-spacing="-0.1">0.1</text>
<path d="M354.5,594.5 L354.5,599.5" stroke="#000" stroke-width="1"/>
<path d="M370.5,594.5 L370.5,599.5" stroke="#000" stroke-width="1"/>
<path d="M387.5,594.5 L387.5,599.5" stroke="#000" stroke-width="1"/>
<path d="M404.5,594.5 L404.5,599.5" stroke="#000" stroke-width="1"/>
<path d="M421.5,594.5 L421.5,601.5" stroke="#000" stroke-width="1"/>
<text x="421" y="615" font-size="13" fill="#000" text-anchor="middle" letter-spacing="-0.1">0.2</text>
<path d="M437.5,594.5 L437.5,599.5" stroke="#000" stroke-width="1"/>
<path d="M454.5,594.5 L454.5,599.5" stroke="#000" stroke-width="1"/>
<path d="M471.5,594.5 L471.5,599.5" stroke="#000" stroke-width="1"/>
<path d="M488.5,594.5 L488.5,599.5" stroke="#000" stroke-width="1"/>
<path d="M504.5,594.5 L504.5,601.5" stroke="#000" stroke-width="1"/>
<text x="503" y="615" font-size="13" fill="#000" text-anchor="middle" letter-spacing="-0.1">0.3</text>
<path d="M521.5,594.5 L521.5,599.5" stroke="#000" stroke-width="1"/>
<path d="M538.5,594.5 L538.5,599.5" stroke="#000" stroke-width="1"/>
<path d="M555.5,594.5 L555.5,599.5" stroke="#000" stroke-width="1"/>
<path d="M571.5,594.5 L571.5,599.5" stroke="#000" stroke-width="1"/>
<path d="M588.5,594.5 L588.5,601.5" stroke="#000" stroke-width="1"/>
<text x="587" y="615" font-size="13" fill="#000" text-anchor="middle" letter-spacing="-0.1">0.4</text>
<path d="M605.5,594.5 L605.5,599.5" stroke="#000" stroke-width="1"/>
<path d="M622.5,594.5 L622.5,599.5" stroke="#000" stroke-width="1"/>
<path d="M638.5,594.5 L638.5,599.5" stroke="#000" stroke-width="1"/>
<path d="M655.5,594.5 L655.5,599.5" stroke="#000" stroke-width="1"/>
<path d="M672.5,594.5 L672.5,601.5" stroke="#000" stroke-width="1"/>
<text x="671" y="615" font-size="13" fill="#000" text-anchor="middle" letter-spacing="-0.1">0.5</text>
<path d="M689.5,594.5 L689.5,599.5" stroke="#000" stroke-width="1"/>
<path d="M706.5,594.5 L706.5,599.5" stroke="#000" stroke-width="1"/>
<path d="M722.5,594.5 L722.5,599.5" stroke="#000" stroke-width="1"/>
<path d="M739.5,594.5 L739.5,599.5" stroke="#000" stroke-width="1"/>
<path d="M756.5,594.5 L756.5,601.5" stroke="#000" stroke-width="1"/>
<text x="755" y="615" font-size="13" fill="#000" text-anchor="middle" letter-spacing="-0.1">0.6</text>
<path d="M773.5,594.5 L773.5,599.5" stroke="#000" stroke-width="1"/>
<path d="M789.5,594.5 L789.5,599.5" stroke="#000" stroke-width="1"/>
<path d="M806.5,594.5 L806.5,599.5" stroke="#000" stroke-width="1"/>
<path d="M823.5,594.5 L823.5,599.5" stroke="#000" stroke-width="1"/>
<path d="M840.5,594.5 L840.5,601.5" stroke="#000" stroke-width="1"/>
<text x="839" y="615" font-size="13" fill="#000" text-anchor="middle" letter-spacing="-0.1">0.7</text>
<path d="M856.5,594.5 L856.5,599.5" stroke="#000" stroke-width="1"/>
<path d="M873.5,594.5 L873.5,599.5" stroke="#000" stroke-width="1"/>
<path d="M890.5,594.5 L890.5,599.5" stroke="#000" stroke-width="1"/>
<path d="M907.5,594.5 L907.5,599.5" stroke="#000" stroke-width="1"/>
<path d="M254.0,593.5 L256.0,593.5 L263.0,592.3 L313.0,591.8 L320.0,591.4 L328.6,590.0 L335.7,585.1 L341.4,572.9 L347.1,551.4 L351.4,531.4 L355.7,505.7 L360.0,468.6 L364.3,428.6 L368.6,397.1 L372.9,371.4 L378.6,337.1 L385.1,314.9 L391.4,310.6 L398.6,321.4 L404.3,342.9 L411.4,377.1 L417.1,402.9 L422.9,437.1 L428.6,468.6 L437.1,500.0 L442.9,520.0 L448.6,537.1 L457.1,555.7 L465.7,568.6 L475.7,575.7 L491.4,582.3 L505.7,584.3 L522.9,587.0 L561.0,588.9 L590.5,590.2 L628.0,590.8 L629.0,591.3 L716.0,591.5 L717.0,592.2 L914.0,592.3" stroke="#000" stroke-width="1.05" fill="none" stroke-linejoin="round"/>
<text x="935" y="283" font-size="13" fill="#4a4a9c" textLength="123" lengthAdjust="spacing">1:[0.000-&gt;0.789](+)</text>
<text x="1659" y="283" font-size="13" fill="#4a4a9c" text-anchor="end" textLength="41" lengthAdjust="spacing">1.44e6</text>
<text x="1646" y="251" font-size="16" fill="#000" text-anchor="end" font-weight="bold" textLength="150.6" lengthAdjust="spacing">Dextromethorphan</text>
<path d="M997.5,310.5 L997.5,594.5 M990,594.5 L1659,594.5" stroke="#000" stroke-width="1" fill="none"/>
<path d="M991.5,566.5 L997.5,566.5" stroke="#000" stroke-width="1"/>
<path d="M991.5,537.5 L997.5,537.5" stroke="#000" stroke-width="1"/>
<path d="M991.5,509.5 L997.5,509.5" stroke="#000" stroke-width="1"/>
<path d="M991.5,480.5 L997.5,480.5" stroke="#000" stroke-width="1"/>
<path d="M989.5,452.5 L997.5,452.5" stroke="#000" stroke-width="1"/>
<path d="M991.5,424.5 L997.5,424.5" stroke="#000" stroke-width="1"/>
<path d="M991.5,395.5 L997.5,395.5" stroke="#000" stroke-width="1"/>
<path d="M991.5,367.5 L997.5,367.5" stroke="#000" stroke-width="1"/>
<path d="M991.5,338.5 L997.5,338.5" stroke="#000" stroke-width="1"/>
<path d="M989.5,310.5 L997.5,310.5" stroke="#000" stroke-width="1"/>
<text x="987" y="313" font-size="13" fill="#000" text-anchor="end" letter-spacing="-0.2">100.00</text>
<text x="987" y="456" font-size="13" fill="#000" text-anchor="end">%</text>
<text x="987" y="597" font-size="13" fill="#000" text-anchor="end" letter-spacing="-0.2">0.00</text>
<path d="M1002.5,594.5 L1002.5,599.5" stroke="#000" stroke-width="1"/>
<path d="M1024.5,594.5 L1024.5,599.5" stroke="#000" stroke-width="1"/>
<path d="M1045.5,594.5 L1045.5,599.5" stroke="#000" stroke-width="1"/>
<path d="M1067.5,594.5 L1067.5,601.5" stroke="#000" stroke-width="1"/>
<text x="1067" y="615" font-size="13" fill="#000" text-anchor="middle" letter-spacing="-0.1">270</text>
<path d="M1089.5,594.5 L1089.5,599.5" stroke="#000" stroke-width="1"/>
<path d="M1110.5,594.5 L1110.5,599.5" stroke="#000" stroke-width="1"/>
<path d="M1132.5,594.5 L1132.5,599.5" stroke="#000" stroke-width="1"/>
<path d="M1154.5,594.5 L1154.5,599.5" stroke="#000" stroke-width="1"/>
<path d="M1176.5,594.5 L1176.5,601.5" stroke="#000" stroke-width="1"/>
<text x="1175" y="615" font-size="13" fill="#000" text-anchor="middle" letter-spacing="-0.1">271</text>
<path d="M1197.5,594.5 L1197.5,599.5" stroke="#000" stroke-width="1"/>
<path d="M1219.5,594.5 L1219.5,599.5" stroke="#000" stroke-width="1"/>
<path d="M1241.5,594.5 L1241.5,599.5" stroke="#000" stroke-width="1"/>
<path d="M1263.5,594.5 L1263.5,599.5" stroke="#000" stroke-width="1"/>
<path d="M1284.5,594.5 L1284.5,601.5" stroke="#000" stroke-width="1"/>
<text x="1283" y="615" font-size="13" fill="#000" text-anchor="middle" letter-spacing="-0.1">272</text>
<path d="M1306.5,594.5 L1306.5,599.5" stroke="#000" stroke-width="1"/>
<path d="M1328.5,594.5 L1328.5,599.5" stroke="#000" stroke-width="1"/>
<path d="M1350.5,594.5 L1350.5,599.5" stroke="#000" stroke-width="1"/>
<path d="M1371.5,594.5 L1371.5,599.5" stroke="#000" stroke-width="1"/>
<path d="M1393.5,594.5 L1393.5,601.5" stroke="#000" stroke-width="1"/>
<text x="1393" y="615" font-size="13" fill="#000" text-anchor="middle" letter-spacing="-0.1">273</text>
<path d="M1415.5,594.5 L1415.5,599.5" stroke="#000" stroke-width="1"/>
<path d="M1437.5,594.5 L1437.5,599.5" stroke="#000" stroke-width="1"/>
<path d="M1458.5,594.5 L1458.5,599.5" stroke="#000" stroke-width="1"/>
<path d="M1480.5,594.5 L1480.5,599.5" stroke="#000" stroke-width="1"/>
<path d="M1502.5,594.5 L1502.5,601.5" stroke="#000" stroke-width="1"/>
<text x="1501" y="615" font-size="13" fill="#000" text-anchor="middle" letter-spacing="-0.1">274</text>
<path d="M1524.5,594.5 L1524.5,599.5" stroke="#000" stroke-width="1"/>
<path d="M1545.5,594.5 L1545.5,599.5" stroke="#000" stroke-width="1"/>
<path d="M1567.5,594.5 L1567.5,599.5" stroke="#000" stroke-width="1"/>
<path d="M1589.5,594.5 L1589.5,599.5" stroke="#000" stroke-width="1"/>
<path d="M1611.5,594.5 L1611.5,601.5" stroke="#000" stroke-width="1"/>
<text x="1611" y="615" font-size="13" fill="#000" text-anchor="middle" letter-spacing="-0.1">275</text>
<path d="M1632.5,594.5 L1632.5,599.5" stroke="#000" stroke-width="1"/>
<path d="M1654.5,594.5 L1654.5,599.5" stroke="#000" stroke-width="1"/>
<path d="M1301.5,594.0 L1301.5,310.5" stroke="#0000e0" stroke-width="1"/>
<text x="1300" y="303" font-size="12.5" fill="#4a4a9c" text-anchor="middle" letter-spacing="0.25">272.15</text>
<path d="M1410.5,594.0 L1410.5,513.6" stroke="#000" stroke-width="1"/>
<text x="1408" y="506" font-size="12.5" fill="#4a4a9c" text-anchor="middle" letter-spacing="0.25">273.15</text>
<path d="M1513.5,594.0 L1513.5,569.8" stroke="#000" stroke-width="1"/>
<text x="1512" y="562" font-size="12.5" fill="#4a4a9c" text-anchor="middle" letter-spacing="0.25">274.10</text>
<path d="M251.5,658 L251.5,954.5 M244,954.5 L732,954.5" stroke="#000" stroke-width="1" fill="none"/>
<path d="M244,929.5 L732,929.5" stroke="#000" stroke-width="1"/>
<path d="M244,904.5 L251.5,904.5" stroke="#000" stroke-width="1"/>
<path d="M244,880.5 L251.5,880.5" stroke="#000" stroke-width="1"/>
<path d="M244,855.5 L251.5,855.5" stroke="#000" stroke-width="1"/>
<path d="M244,830.5 L251.5,830.5" stroke="#000" stroke-width="1"/>
<path d="M244,806.5 L732,806.5" stroke="#000" stroke-width="1"/>
<path d="M244,781.5 L251.5,781.5" stroke="#000" stroke-width="1"/>
<path d="M244,757.5 L251.5,757.5" stroke="#000" stroke-width="1"/>
<path d="M244,732.5 L251.5,732.5" stroke="#000" stroke-width="1"/>
<path d="M244,707.5 L251.5,707.5" stroke="#000" stroke-width="1"/>
<path d="M244,683.5 L732,683.5" stroke="#000" stroke-width="1"/>
<path d="M244,658.5 L251.5,658.5" stroke="#000" stroke-width="1"/>
<text x="239" y="688" font-size="13" fill="#000" text-anchor="end">1</text>
<text x="239" y="811" font-size="13" fill="#000" text-anchor="end" letter-spacing="-0.2">0.5</text>
<text x="239" y="934" font-size="13" fill="#000" text-anchor="end">0</text>
<path d="M295.5,658 L295.5,958.5" stroke="#000" stroke-width="1"/>
<text x="295" y="970" font-size="13" fill="#000" text-anchor="middle" letter-spacing="-0.2">-50</text>
<path d="M394.5,658 L394.5,958.5" stroke="#000" stroke-width="1"/>
<text x="394" y="970" font-size="13" fill="#000" text-anchor="middle" letter-spacing="-0.2">-40</text>
<path d="M493.5,658 L493.5,958.5" stroke="#000" stroke-width="1"/>
<text x="493" y="970" font-size="13" fill="#000" text-anchor="middle" letter-spacing="-0.2">-30</text>
<path d="M592.5,658 L592.5,958.5" stroke="#000" stroke-width="1"/>
<text x="592" y="970" font-size="13" fill="#000" text-anchor="middle" letter-spacing="-0.2">-20</text>
<path d="M691.5,658 L691.5,958.5" stroke="#000" stroke-width="1"/>
<text x="691" y="970" font-size="13" fill="#000" text-anchor="middle" letter-spacing="-0.2">-10</text>
<path d="M255.5,954.5 L255.5,958.5" stroke="#000" stroke-width="1"/>
<path d="M275.5,954.5 L275.5,958.5" stroke="#000" stroke-width="1"/>
<path d="M315.5,954.5 L315.5,958.5" stroke="#000" stroke-width="1"/>
<path d="M335.5,954.5 L335.5,958.5" stroke="#000" stroke-width="1"/>
<path d="M354.5,954.5 L354.5,958.5" stroke="#000" stroke-width="1"/>
<path d="M374.5,954.5 L374.5,958.5" stroke="#000" stroke-width="1"/>
<path d="M414.5,954.5 L414.5,958.5" stroke="#000" stroke-width="1"/>
<path d="M434.5,954.5 L434.5,958.5" stroke="#000" stroke-width="1"/>
<path d="M454.5,954.5 L454.5,958.5" stroke="#000" stroke-width="1"/>
<path d="M473.5,954.5 L473.5,958.5" stroke="#000" stroke-width="1"/>
<path d="M513.5,954.5 L513.5,958.5" stroke="#000" stroke-width="1"/>
<path d="M533.5,954.5 L533.5,958.5" stroke="#000" stroke-width="1"/>
<path d="M553.5,954.5 L553.5,958.5" stroke="#000" stroke-width="1"/>
<path d="M572.5,954.5 L572.5,958.5" stroke="#000" stroke-width="1"/>
<path d="M612.5,954.5 L612.5,958.5" stroke="#000" stroke-width="1"/>
<path d="M632.5,954.5 L632.5,958.5" stroke="#000" stroke-width="1"/>
<path d="M652.5,954.5 L652.5,958.5" stroke="#000" stroke-width="1"/>
<path d="M672.5,954.5 L672.5,958.5" stroke="#000" stroke-width="1"/>
<path d="M711.5,954.5 L711.5,958.5" stroke="#000" stroke-width="1"/>
<path d="M731.5,954.5 L731.5,958.5" stroke="#000" stroke-width="1"/>
<path d="M295.5,929.5 L345.1,929.5 L394.6,929.5 L444.1,893.5 L493.7,812.0 L543.2,703.9 L592.8,683.2 L642.4,822.1 L691.9,894.2" stroke="#4391e8" stroke-width="2.2" fill="none" stroke-linejoin="round"/>
<path d="M295.5,923.5 L301.5,929.5 L295.5,935.5 L289.5,929.5 Z" fill="#4391e8"/>
<path d="M345.1,923.5 L351.1,929.5 L345.1,935.5 L339.1,929.5 Z" fill="#4391e8"/>
<path d="M394.6,923.5 L400.6,929.5 L394.6,935.5 L388.6,929.5 Z" fill="#4391e8"/>
<path d="M444.1,887.5 L450.1,893.5 L444.1,899.5 L438.1,893.5 Z" fill="#4391e8"/>
<path d="M493.7,806.0 L499.7,812.0 L493.7,818.0 L487.7,812.0 Z" fill="#4391e8"/>
<path d="M543.2,697.9 L549.2,703.9 L543.2,709.9 L537.2,703.9 Z" fill="#4391e8"/>
<path d="M592.8,677.2 L598.8,683.2 L592.8,689.2 L586.8,683.2 Z" fill="#4391e8"/>
<path d="M642.4,816.1 L648.4,822.1 L642.4,828.1 L636.4,822.1 Z" fill="#4391e8"/>
<path d="M691.9,888.2 L697.9,894.2 L691.9,900.2 L685.9,894.2 Z" fill="#4391e8"/>
<path d="M295.5,826.1 L345.1,786.7 L394.6,720.7 L444.1,734.7 L493.7,772.4 L543.2,854.4 L592.8,899.2 L642.4,920.9 L691.9,923.6" stroke="#f9ae42" stroke-width="2.2" fill="none" stroke-linejoin="round"/>
<path d="M295.5,820.1 L301.5,826.1 L295.5,832.1 L289.5,826.1 Z" fill="#f9ae42"/>
<path d="M345.1,780.7 L351.1,786.7 L345.1,792.7 L339.1,786.7 Z" fill="#f9ae42"/>
<path d="M394.6,714.7 L400.6,720.7 L394.6,726.7 L388.6,720.7 Z" fill="#f9ae42"/>
<path d="M444.1,728.7 L450.1,734.7 L444.1,740.7 L438.1,734.7 Z" fill="#f9ae42"/>
<path d="M493.7,766.4 L499.7,772.4 L493.7,778.4 L487.7,772.4 Z" fill="#f9ae42"/>
<path d="M543.2,848.4 L549.2,854.4 L543.2,860.4 L537.2,854.4 Z" fill="#f9ae42"/>
<path d="M592.8,893.2 L598.8,899.2 L592.8,905.2 L586.8,899.2 Z" fill="#f9ae42"/>
<path d="M642.4,914.9 L648.4,920.9 L642.4,926.9 L636.4,920.9 Z" fill="#f9ae42"/>
<path d="M691.9,917.6 L697.9,923.6 L691.9,929.6 L685.9,923.6 Z" fill="#f9ae42"/>
<path d="M295.5,929.5 L345.1,929.5 L394.6,895.3 L444.1,882.5 L493.7,768.7 L543.2,731.0 L592.8,817.1 L642.4,906.2 L691.9,914.5" stroke="#dd4212" stroke-width="2.2" fill="none" stroke-linejoin="round"/>
<path d="M295.5,923.5 L301.5,929.5 L295.5,935.5 L289.5,929.5 Z" fill="#dd4212"/>
<path d="M345.1,923.5 L351.1,929.5 L345.1,935.5 L339.1,929.5 Z" fill="#dd4212"/>
<path d="M394.6,889.3 L400.6,895.3 L394.6,901.3 L388.6,895.3 Z" fill="#dd4212"/>
<path d="M444.1,876.5 L450.1,882.5 L444.1,888.5 L438.1,882.5 Z" fill="#dd4212"/>
<path d="M493.7,762.7 L499.7,768.7 L493.7,774.7 L487.7,768.7 Z" fill="#dd4212"/>
<path d="M543.2,725.0 L549.2,731.0 L543.2,737.0 L537.2,731.0 Z" fill="#dd4212"/>
<path d="M592.8,811.1 L598.8,817.1 L592.8,823.1 L586.8,817.1 Z" fill="#dd4212"/>
<path d="M642.4,900.2 L648.4,906.2 L642.4,912.2 L636.4,906.2 Z" fill="#dd4212"/>
<path d="M691.9,908.5 L697.9,914.5 L691.9,920.5 L685.9,914.5 Z" fill="#dd4212"/>
<path d="M761,669.5 L785,669.5" stroke="#4391e8" stroke-width="2"/>
<circle cx="773" cy="669.5" r="2" fill="#4391e8"/>
<text x="789" y="674" font-size="12.5" fill="#000" textLength="84.3" lengthAdjust="spacing">272.40&gt;215.20</text>
<path d="M761,685.5 L785,685.5" stroke="#f9ae42" stroke-width="2"/>
<circle cx="773" cy="685.5" r="2" fill="#f9ae42"/>
<text x="789" y="690" font-size="12.5" fill="#000" textLength="84.3" lengthAdjust="spacing">272.40&gt;171.10</text>
<path d="M761,701.5 L785,701.5" stroke="#dd4212" stroke-width="2"/>
<circle cx="773" cy="701.5" r="2" fill="#dd4212"/>
<text x="789" y="706" font-size="12.5" fill="#000" textLength="84.3" lengthAdjust="spacing">272.40&gt;213.15</text>
<text x="937" y="661" font-size="13" fill="#4a4a9c" textLength="167.7" lengthAdjust="spacing">All Event:[0.000-&gt;0.780](+)</text>
<text x="1656" y="661" font-size="13" fill="#4a4a9c" text-anchor="end" textLength="40.8" lengthAdjust="spacing">5.18e4</text>
<path d="M1009.5,688.5 L1009.5,964.5 M1002,964.5 L1657,964.5" stroke="#000" stroke-width="1" fill="none"/>
<path d="M1003.5,936.5 L1009.5,936.5" stroke="#000" stroke-width="1"/>
<path d="M1003.5,909.5 L1009.5,909.5" stroke="#000" stroke-width="1"/>
<path d="M1003.5,881.5 L1009.5,881.5" stroke="#000" stroke-width="1"/>
<path d="M1003.5,854.5 L1009.5,854.5" stroke="#000" stroke-width="1"/>
<path d="M1001.5,826.5 L1009.5,826.5" stroke="#000" stroke-width="1"/>
<path d="M1003.5,798.5 L1009.5,798.5" stroke="#000" stroke-width="1"/>
<path d="M1003.5,771.5 L1009.5,771.5" stroke="#000" stroke-width="1"/>
<path d="M1003.5,743.5 L1009.5,743.5" stroke="#000" stroke-width="1"/>
<path d="M1003.5,716.5 L1009.5,716.5" stroke="#000" stroke-width="1"/>
<path d="M1001.5,688.5 L1009.5,688.5" stroke="#000" stroke-width="1"/>
<text x="999" y="691" font-size="13" fill="#000" text-anchor="end" letter-spacing="-0.2">100.00</text>
<text x="999" y="830" font-size="13" fill="#000" text-anchor="end">%</text>
<text x="999" y="967" font-size="13" fill="#000" text-anchor="end" letter-spacing="-0.2">0.00</text>
<path d="M1020.5,964.5 L1020.5,969.5" stroke="#000" stroke-width="1"/>
<path d="M1032.5,964.5 L1032.5,969.5" stroke="#000" stroke-width="1"/>
<path d="M1045.5,964.5 L1045.5,969.5" stroke="#000" stroke-width="1"/>
<path d="M1057.5,964.5 L1057.5,971.5" stroke="#000" stroke-width="1"/>
<text x="1057" y="985" font-size="13" fill="#000" text-anchor="middle" letter-spacing="-0.1">25</text>
<path d="M1069.5,964.5 L1069.5,969.5" stroke="#000" stroke-width="1"/>
<path d="M1082.5,964.5 L1082.5,969.5" stroke="#000" stroke-width="1"/>
<path d="M1094.5,964.5 L1094.5,969.5" stroke="#000" stroke-width="1"/>
<path d="M1107.5,964.5 L1107.5,969.5" stroke="#000" stroke-width="1"/>
<path d="M1119.5,964.5 L1119.5,971.5" stroke="#000" stroke-width="1"/>
<text x="1119" y="985" font-size="13" fill="#000" text-anchor="middle" letter-spacing="-0.1">50</text>
<path d="M1131.5,964.5 L1131.5,969.5" stroke="#000" stroke-width="1"/>
<path d="M1144.5,964.5 L1144.5,969.5" stroke="#000" stroke-width="1"/>
<path d="M1156.5,964.5 L1156.5,969.5" stroke="#000" stroke-width="1"/>
<path d="M1169.5,964.5 L1169.5,969.5" stroke="#000" stroke-width="1"/>
<path d="M1181.5,964.5 L1181.5,971.5" stroke="#000" stroke-width="1"/>
<text x="1181" y="985" font-size="13" fill="#000" text-anchor="middle" letter-spacing="-0.1">75</text>
<path d="M1193.5,964.5 L1193.5,969.5" stroke="#000" stroke-width="1"/>
<path d="M1206.5,964.5 L1206.5,969.5" stroke="#000" stroke-width="1"/>
<path d="M1218.5,964.5 L1218.5,969.5" stroke="#000" stroke-width="1"/>
<path d="M1231.5,964.5 L1231.5,969.5" stroke="#000" stroke-width="1"/>
<path d="M1243.5,964.5 L1243.5,971.5" stroke="#000" stroke-width="1"/>
<text x="1243" y="985" font-size="13" fill="#000" text-anchor="middle" letter-spacing="-0.1">100</text>
<path d="M1255.5,964.5 L1255.5,969.5" stroke="#000" stroke-width="1"/>
<path d="M1268.5,964.5 L1268.5,969.5" stroke="#000" stroke-width="1"/>
<path d="M1280.5,964.5 L1280.5,969.5" stroke="#000" stroke-width="1"/>
<path d="M1293.5,964.5 L1293.5,969.5" stroke="#000" stroke-width="1"/>
<path d="M1305.5,964.5 L1305.5,971.5" stroke="#000" stroke-width="1"/>
<text x="1305" y="985" font-size="13" fill="#000" text-anchor="middle" letter-spacing="-0.1">125</text>
<path d="M1317.5,964.5 L1317.5,969.5" stroke="#000" stroke-width="1"/>
<path d="M1330.5,964.5 L1330.5,969.5" stroke="#000" stroke-width="1"/>
<path d="M1342.5,964.5 L1342.5,969.5" stroke="#000" stroke-width="1"/>
<path d="M1355.5,964.5 L1355.5,969.5" stroke="#000" stroke-width="1"/>
<path d="M1367.5,964.5 L1367.5,971.5" stroke="#000" stroke-width="1"/>
<text x="1367" y="985" font-size="13" fill="#000" text-anchor="middle" letter-spacing="-0.1">150</text>
<path d="M1379.5,964.5 L1379.5,969.5" stroke="#000" stroke-width="1"/>
<path d="M1392.5,964.5 L1392.5,969.5" stroke="#000" stroke-width="1"/>
<path d="M1404.5,964.5 L1404.5,969.5" stroke="#000" stroke-width="1"/>
<path d="M1417.5,964.5 L1417.5,969.5" stroke="#000" stroke-width="1"/>
<path d="M1429.5,964.5 L1429.5,971.5" stroke="#000" stroke-width="1"/>
<text x="1429" y="985" font-size="13" fill="#000" text-anchor="middle" letter-spacing="-0.1">175</text>
<path d="M1441.5,964.5 L1441.5,969.5" stroke="#000" stroke-width="1"/>
<path d="M1454.5,964.5 L1454.5,969.5" stroke="#000" stroke-width="1"/>
<path d="M1466.5,964.5 L1466.5,969.5" stroke="#000" stroke-width="1"/>
<path d="M1479.5,964.5 L1479.5,969.5" stroke="#000" stroke-width="1"/>
<path d="M1491.5,964.5 L1491.5,971.5" stroke="#000" stroke-width="1"/>
<text x="1491" y="985" font-size="13" fill="#000" text-anchor="middle" letter-spacing="-0.1">200</text>
<path d="M1503.5,964.5 L1503.5,969.5" stroke="#000" stroke-width="1"/>
<path d="M1516.5,964.5 L1516.5,969.5" stroke="#000" stroke-width="1"/>
<path d="M1528.5,964.5 L1528.5,969.5" stroke="#000" stroke-width="1"/>
<path d="M1541.5,964.5 L1541.5,969.5" stroke="#000" stroke-width="1"/>
<path d="M1553.5,964.5 L1553.5,971.5" stroke="#000" stroke-width="1"/>
<text x="1553" y="985" font-size="13" fill="#000" text-anchor="middle" letter-spacing="-0.1">225</text>
<path d="M1565.5,964.5 L1565.5,969.5" stroke="#000" stroke-width="1"/>
<path d="M1578.5,964.5 L1578.5,969.5" stroke="#000" stroke-width="1"/>
<path d="M1590.5,964.5 L1590.5,969.5" stroke="#000" stroke-width="1"/>
<path d="M1603.5,964.5 L1603.5,969.5" stroke="#000" stroke-width="1"/>
<path d="M1615.5,964.5 L1615.5,971.5" stroke="#000" stroke-width="1"/>
<text x="1615" y="985" font-size="13" fill="#000" text-anchor="middle" letter-spacing="-0.1">250</text>
<path d="M1627.5,964.5 L1627.5,969.5" stroke="#000" stroke-width="1"/>
<path d="M1640.5,964.5 L1640.5,969.5" stroke="#000" stroke-width="1"/>
<path d="M1652.5,964.5 L1652.5,969.5" stroke="#000" stroke-width="1"/>
<rect x="1097" y="954" width="1" height="10" fill="#000"/>
<rect x="1104" y="940" width="1" height="24" fill="#000"/>
<rect x="1221" y="930" width="1" height="34" fill="#000"/>
<rect x="1260" y="948" width="1" height="16" fill="#000"/>
<rect x="1280" y="906" width="1" height="58" fill="#000"/>
<rect x="1283" y="950" width="1" height="14" fill="#000"/>
<rect x="1285" y="951" width="1" height="13" fill="#000"/>
<rect x="1291" y="953" width="1" height="11" fill="#000"/>
<rect x="1295" y="917" width="1" height="47" fill="#000"/>
<rect x="1310" y="946" width="1" height="18" fill="#000"/>
<rect x="1312" y="870" width="1" height="94" fill="#000"/>
<rect x="1313" y="804" width="1" height="160" fill="#000"/>
<rect x="1315" y="950" width="1" height="14" fill="#000"/>
<rect x="1320" y="954" width="1" height="10" fill="#000"/>
<rect x="1322" y="950" width="1" height="14" fill="#000"/>
<rect x="1323" y="951" width="1" height="13" fill="#000"/>
<rect x="1330" y="945" width="1" height="19" fill="#000"/>
<rect x="1345" y="908" width="1" height="56" fill="#000"/>
<rect x="1349" y="954" width="1" height="10" fill="#000"/>
<rect x="1350" y="954" width="1" height="10" fill="#000"/>
<rect x="1352" y="938" width="1" height="26" fill="#000"/>
<rect x="1355" y="953" width="1" height="11" fill="#000"/>
<rect x="1360" y="780" width="1" height="184" fill="#000"/>
<rect x="1374" y="952" width="1" height="12" fill="#000"/>
<rect x="1382" y="929" width="1" height="35" fill="#000"/>
<rect x="1385" y="953" width="1" height="11" fill="#000"/>
<rect x="1387" y="937" width="1" height="27" fill="#000"/>
<rect x="1389" y="903" width="1" height="61" fill="#000"/>
<rect x="1390" y="911" width="1" height="53" fill="#000"/>
<rect x="1395" y="957" width="1" height="7" fill="#000"/>
<rect x="1404" y="949" width="1" height="15" fill="#000"/>
<rect x="1414" y="954" width="1" height="10" fill="#000"/>
<rect x="1417" y="949" width="1" height="15" fill="#000"/>
<rect x="1424" y="904" width="1" height="60" fill="#000"/>
<rect x="1425" y="962" width="1" height="2" fill="#000"/>
<rect x="1444" y="951" width="1" height="13" fill="#000"/>
<rect x="1486" y="911" width="1" height="53" fill="#000"/>
<rect x="1496" y="957" width="1" height="7" fill="#000"/>
<rect x="1512" y="953" width="1" height="11" fill="#000"/>
<rect x="1514" y="955" width="1" height="9" fill="#000"/>
<rect x="1518" y="949" width="1" height="15" fill="#000"/>
<rect x="1559" y="961" width="1" height="3" fill="#000"/>
<rect x="1568" y="957" width="1" height="7" fill="#000"/>
<rect x="1570" y="951" width="1" height="13" fill="#000"/>
<rect x="1592" y="962" width="1" height="2" fill="#000"/>
<rect x="1620" y="961" width="1" height="3" fill="#000"/>
<rect x="1623" y="949" width="1" height="15" fill="#000"/>
<rect x="1625" y="947" width="1" height="17" fill="#000"/>
<rect x="1419" y="730" width="1" height="234" fill="#f5ad36"/>
<rect x="1419" y="786" width="1" height="62" fill="#000"/>
<rect x="1523" y="740" width="1" height="224" fill="#e0561c"/>
<rect x="1523" y="838" width="1" height="108" fill="#000"/>
<rect x="1528" y="688" width="1" height="276" fill="#3d8ef0"/>
<rect x="1528" y="843" width="1" height="81" fill="#000"/>
<text x="1102" y="933" font-size="12.5" fill="#4a4a9c" text-anchor="middle" letter-spacing="0.25">44.15</text>
<text x="1219" y="923" font-size="12.5" fill="#4a4a9c" text-anchor="middle" letter-spacing="0.25">91.15</text>
<text x="1279" y="899" font-size="12.5" fill="#4a4a9c" text-anchor="middle" letter-spacing="0.25">115.05</text>
<text x="1287" y="859" font-size="12.5" fill="#4a4a9c" text-anchor="middle" letter-spacing="0.25">128.10</text>
<text x="1311" y="797" font-size="12.5" fill="#4a4a9c" text-anchor="middle" letter-spacing="0.25">128.15</text>
<text x="1359" y="773" font-size="12.5" fill="#4a4a9c" text-anchor="middle" letter-spacing="0.25">147.15</text>
<text x="1387" y="869" font-size="12.5" fill="#4a4a9c" text-anchor="middle" letter-spacing="0.25">147.20</text>
<text x="1388" y="896" font-size="12.5" fill="#4a4a9c" text-anchor="middle" letter-spacing="0.25">159.15</text>
<text x="1418" y="723" font-size="12.5" fill="#4a4a9c" text-anchor="middle" letter-spacing="0.25">171.10</text>
<text x="1446" y="782" font-size="12.5" fill="#4a4a9c" text-anchor="middle" letter-spacing="0.25">171.15</text>
<text x="1446" y="894" font-size="12.5" fill="#4a4a9c" text-anchor="middle" letter-spacing="0.25">173.15</text>
<text x="1450" y="917" font-size="12.5" fill="#4a4a9c" text-anchor="middle" letter-spacing="0.25">173.20</text>
<text x="1450" y="937" font-size="12.5" fill="#4a4a9c" text-anchor="middle" letter-spacing="0.25">173.25</text>
<text x="1527" y="681" font-size="12.5" fill="#4a4a9c" text-anchor="middle" letter-spacing="0.25">215.20</text>
<text x="1497.5" y="704" font-size="12.5" fill="#4a4a9c" text-anchor="middle" letter-spacing="0.25">215.15</text>
<text x="1497.5" y="729" font-size="12.5" fill="#4a4a9c" text-anchor="middle" letter-spacing="0.25">213.15</text>
<text x="1569" y="944" font-size="12.5" fill="#4a4a9c" text-anchor="middle" letter-spacing="0.25">231.80</text>
<text x="1624" y="940" font-size="12.5" fill="#4a4a9c" text-anchor="middle" letter-spacing="0.25">254.30</text>
<path d="M1308,864 L1312.5,869" stroke="#4a4a9c" stroke-width="1"/>
<path d="M1365.5,869 L1361,873.5" stroke="#4a4a9c" stroke-width="1"/>
<path d="M1423.5,781.5 L1419.5,785.5" stroke="#4a4a9c" stroke-width="1"/>
<path d="M1428.5,899.5 L1424.5,904" stroke="#4a4a9c" stroke-width="1"/>
<path d="M1428.5,917 L1424.5,920.5" stroke="#4a4a9c" stroke-width="1"/>
<path d="M1428.5,936.5 L1424.5,940.5" stroke="#4a4a9c" stroke-width="1"/>
<path d="M1524,705 L1528.5,709.5" stroke="#4a4a9c" stroke-width="1"/>
<path d="M1518.5,735.5 L1523.5,740.5" stroke="#4a4a9c" stroke-width="1"/>
</svg></body></html>
